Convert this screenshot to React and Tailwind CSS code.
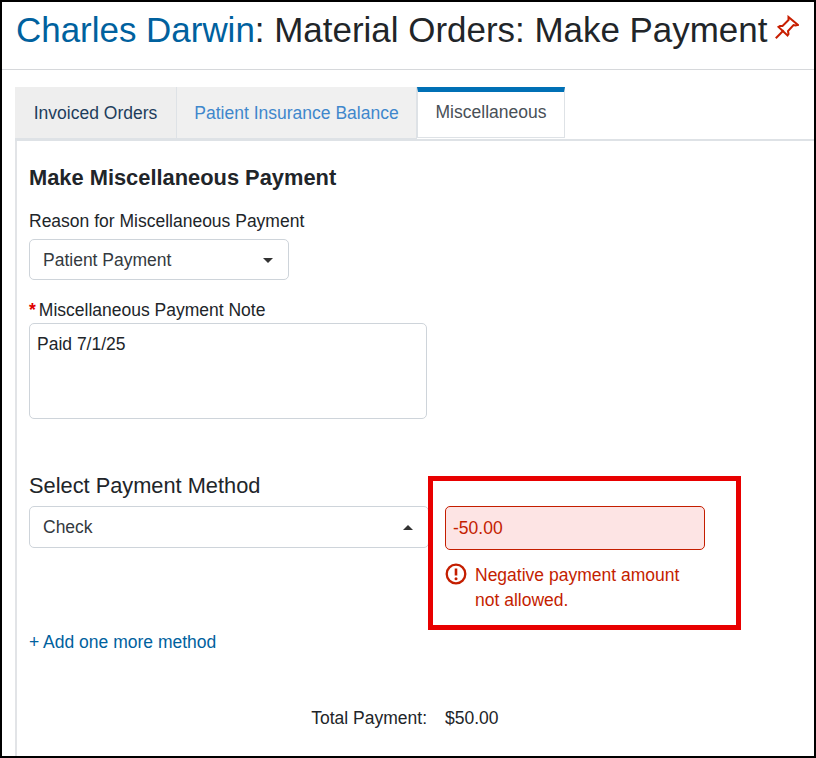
import React from 'react';

const PinIcon = () => (
  <svg width="24" height="24" viewBox="0 0 24 24" fill="none" stroke="#c81e00" strokeWidth="2" strokeLinejoin="miter" strokeLinecap="square">
    <path d="M13.5 2 L23 10 L20.5 10.5 L18.5 10 L13 16 L13.5 19 L12.5 20.5 L3.5 12 L5 11 L7.5 11 L13.5 5 Z" />
    <path d="M8 16 L1.5 22.5" />
  </svg>
);

const AlertIcon = () => (
  <svg width="22" height="22" viewBox="0 0 22 22" fill="none" className="shrink-0">
    <circle cx="11" cy="11" r="9.3" stroke="#c41e00" strokeWidth="2.3" />
    <path d="M11 5.5 V12.5" stroke="#c41e00" strokeWidth="2.6" />
    <circle cx="11" cy="15.8" r="1.5" fill="#c41e00" />
  </svg>
);

const Caret = ({ up }) => (
  <span
    className={
      up
        ? 'h-0 w-0 border-x-[5px] border-b-[5px] border-x-transparent border-b-[#333]'
        : 'h-0 w-0 border-x-[5px] border-t-[5px] border-x-transparent border-t-[#333]'
    }
  />
);

export default function App() {
  return (
    <div className="relative h-[758px] w-[816px] overflow-hidden border-2 border-black bg-white font-['Liberation_Sans',Arial,sans-serif] text-[17.5px] text-[#212529]">
      <header className="flex h-[68px] items-start border-b border-[#d6d8db] pl-[14px] pt-[7px]">
        <h1 className="text-[34.95px] leading-[42px] text-[#212529]">
          <span className="text-[#00619e]">Charles Darwin</span>: Material Orders: Make Payment
        </h1>
        <span className="ml-[8px] mt-[6px]"><PinIcon /></span>
      </header>

      <div className="ml-[13px] mt-[17px] flex h-[54px] items-start border-b-[2px] border-[#dee2e6]">
        <div className="flex h-[52px] w-[162px] items-center justify-center border-r border-b border-[#dee2e6] bg-[#eeeeee] pt-[2px] text-[#1d3d5c]">Invoiced Orders</div>
        <div className="flex h-[52px] w-[240px] items-center justify-center border-r border-b border-[#dee2e6] bg-[#f0f0f0] pt-[2px] text-[#3f87cc]">Patient Insurance Balance</div>
        <div className="flex h-[51px] w-[148px] items-center justify-center border-x border-b border-t-[5px] border-[#dee2e6] border-t-[#0070b5] bg-white pb-[4px] text-[#495057]">Miscellaneous</div>
      </div>

      <main className="ml-[13px] h-[640px] border-l-2 border-[#e2e4e7] pl-[12px]">
        <h2 className="pt-[23px] text-[21.85px] font-bold leading-[28px] text-[#212529]">Make Miscellaneous Payment</h2>

        <label className="mt-[17px] block leading-[24px]">Reason for Miscellaneous Payment</label>
        <div className="mt-[6px] flex h-[41px] w-[260px] items-center justify-between rounded-[5px] border border-[#ced4da] pl-[13px] pr-[15px] pt-[2px] text-[#343a40]">
          Patient Payment
          <Caret />
        </div>

        <label className="mt-[18px] block leading-[24px]">
          <span className="mr-[3px] font-bold text-[#e00000]">*</span>Miscellaneous Payment Note
        </label>
        <div className="mt-[1px] h-[96px] w-[398px] rounded-[5px] border border-[#ced4da] px-[7px] pb-[6px] pt-[7px] leading-[26px]">Paid 7/1/25</div>

        <h3 className="mt-[52px] text-[21.8px] leading-[30px]">Select Payment Method</h3>
        <div className="mt-[5px] flex items-start">
          <div className="flex h-[42px] w-[400px] items-center justify-between rounded-[5px] border border-[#ced4da] pl-[13px] pr-[15px] text-[#343a40]">
            Check
            <Caret up />
          </div>
          <div className="ml-[16px] w-[260px]">
            <div className="flex h-[44px] items-center rounded-[5px] border border-[#c41e00] bg-[#fde4e4] pl-[7px] text-[#c41e00]">-50.00</div>
            <div className="mt-[13px] flex gap-[8px] leading-[25px] text-[#c41e00]">
              <AlertIcon />
              <span className="w-[220px]">Negative payment amount not allowed.</span>
            </div>
          </div>
        </div>

        <a className="mt-[17px] block leading-[24px] text-[#00619e]">+ Add one more method</a>

        <div className="mt-[52px] flex leading-[24px]">
          <span className="w-[398px] text-right">Total Payment:</span>
          <span className="ml-[18px]">$50.00</span>
        </div>
      </main>

      {/* red annotation box over the screenshot */}
      <div className="absolute left-[426px] top-[474px] h-[154px] w-[313px] border-[5px] border-[#e80000]" />
    </div>
  );
}
